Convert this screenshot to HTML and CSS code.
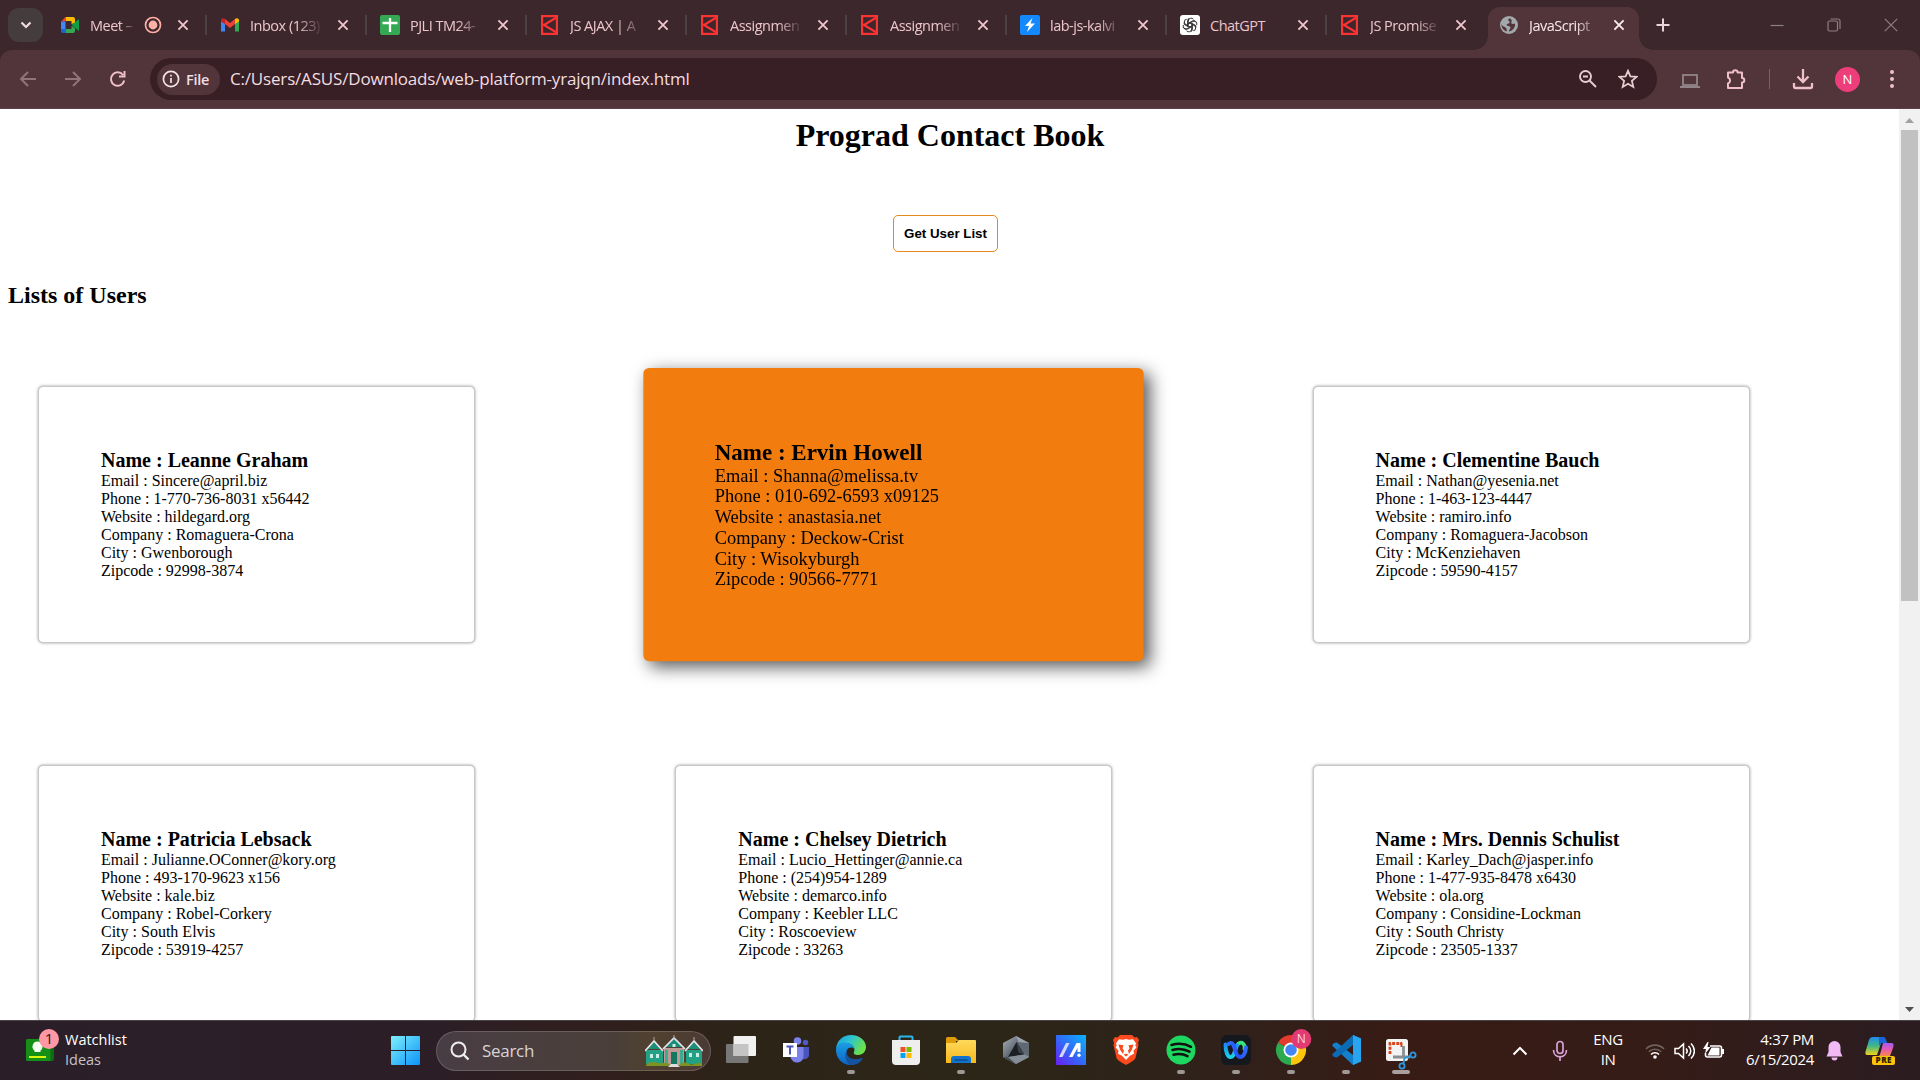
FILE: index.html
```html
<!DOCTYPE html>
<html lang="en">
<head>
<meta charset="utf-8">
<title>JavaScript</title>
<link rel="stylesheet" href="styles.css">
</head>
<body>
<svg class="defs" aria-hidden="true">
  <defs>
    <linearGradient id="gWin" x1="0" y1="0" x2="1" y2="1"><stop offset="0" stop-color="#7df0fb"/><stop offset="1" stop-color="#0c93fa"/></linearGradient>
    <linearGradient id="gEdgeA" x1="0" y1="0" x2="1" y2=".4"><stop offset="0" stop-color="#1aa0dc"/><stop offset=".5" stop-color="#2ec4d0"/><stop offset="1" stop-color="#6ae04c"/></linearGradient>
    <linearGradient id="gEdgeB" x1="0" y1="0" x2="0" y2="1"><stop offset="0" stop-color="#1b9fe4"/><stop offset="1" stop-color="#0b64c4"/></linearGradient>
    <linearGradient id="gMy" x1="0" y1="1" x2="1" y2="0"><stop offset="0" stop-color="#6a1ef4"/><stop offset=".5" stop-color="#2f6cf8"/><stop offset="1" stop-color="#08b4ff"/></linearGradient>
    <linearGradient id="gHex" x1="0" y1="0" x2="1" y2="1"><stop offset="0" stop-color="#a9b2bb"/><stop offset=".5" stop-color="#59626c"/><stop offset="1" stop-color="#8d97a1"/></linearGradient>
    <linearGradient id="gFolder" x1="0" y1="0" x2="0" y2="1"><stop offset="0" stop-color="#ffd95c"/><stop offset="1" stop-color="#f7b91d"/></linearGradient>
    <linearGradient id="gWebex" x1="0" y1="0" x2="1" y2="0"><stop offset="0" stop-color="#2b6cff"/><stop offset=".6" stop-color="#2b50f5"/><stop offset="1" stop-color="#2b6cff"/></linearGradient>
    <linearGradient id="gWebexL" x1="0" y1="0" x2="0" y2="1"><stop offset="0" stop-color="#1a8cf0"/><stop offset="1" stop-color="#1ccfe6"/></linearGradient>
    <linearGradient id="gCopA" x1="0" y1="0" x2="0" y2="1"><stop offset="0" stop-color="#1e8cf0"/><stop offset=".5" stop-color="#41b883"/><stop offset="1" stop-color="#f5d21b"/></linearGradient>
    <linearGradient id="gCopB" x1="0" y1="0" x2="0" y2="1"><stop offset="0" stop-color="#a15bf2"/><stop offset=".5" stop-color="#e75ab0"/><stop offset="1" stop-color="#f98a4b"/></linearGradient>
    <symbol id="close" viewBox="0 0 20 20"><path d="M5.4 5.4l9.2 9.2M14.6 5.4l-9.2 9.2" stroke="currentColor" stroke-width="1.9"/></symbol>
    <symbol id="kalvium" viewBox="0 0 20 20"><rect x="2.1" y="1.1" width="14.8" height="17.8" fill="none" stroke="#fb3333" stroke-width="2.2"/><path d="M16.5 2.5L4 10l12.500 7.500" fill="none" stroke="#fb3333" stroke-width="2.2"/></symbol>
  </defs>
</svg>
<header class="browser">
  <div class="tabstrip">
    <button class="tab-search"><svg width="14" height="14" viewBox="0 0 14 14"><path d="M2.500 4.500L7 9l4.500-4.500" fill="none" stroke="#f0dcdf" stroke-width="2.200"/></svg></button>
    <div class="tab">
      <svg class="fav" viewBox="0 0 20 20"><path d="M5.500 2H13a2 2 0 0 1 2 2v4l-3.500 1V6H5.500z" fill="#fbbc04"/><path d="M5.500 2v4.500H1z" fill="#ea4335"/><path d="M1 6.500h4.500v7.500H1z" fill="#4285f4"/><path d="M1 14h4.500v4H3a2 2 0 0 1-2-2z" fill="#1967d2"/><path d="M5.500 14h6v-3L15 13v3a2 2 0 0 1-2 2H5.500z" fill="#34a853"/><path d="M11.500 10L19 4v12z" fill="#0f9d48"/></svg>
      <span class="tab-title short">Meet –</span>
      <svg class="rec" viewBox="0 0 18 18"><circle cx="9" cy="9" r="7.500" fill="none" stroke="#ffb0a6" stroke-width="1.700"/><circle cx="9" cy="9" r="4.400" fill="#ffb0a6"/></svg>
      <svg class="close"><use href="#close"/></svg>
    </div>
    <div class="tab">
      <svg class="fav" viewBox="0 0 20 20"><path d="M1 5v11.500h4V8z" fill="#4285f4"/><path d="M19 5v11.500h-4V8z" fill="#34a853"/><path d="M5 4l5 4 5-4v5l-5 4-5-4z" fill="#ea4335"/><path d="M1 5.500C1 3 3.500 2.500 5 4v5L1 6.500z" fill="#c5221f"/><path d="M19 5.500C19 3 16.500 2.500 15 4v5l4-2.500z" fill="#fbbc04"/></svg>
      <span class="tab-title">Inbox (123)</span><svg class="close"><use href="#close"/></svg>
    </div>
    <div class="tab">
      <svg class="fav" viewBox="0 0 20 20"><rect width="20" height="20" rx="2" fill="#34a853"/><path d="M10 3v14M2.500 8h15" stroke="#fff" stroke-width="2.300"/></svg>
      <span class="tab-title">PJLI TM24-</span><svg class="close"><use href="#close"/></svg>
    </div>
    <div class="tab"><svg class="fav"><use href="#kalvium"/></svg><span class="tab-title">JS AJAX | A</span><svg class="close"><use href="#close"/></svg></div>
    <div class="tab"><svg class="fav"><use href="#kalvium"/></svg><span class="tab-title">Assignmen</span><svg class="close"><use href="#close"/></svg></div>
    <div class="tab"><svg class="fav"><use href="#kalvium"/></svg><span class="tab-title">Assignmen</span><svg class="close"><use href="#close"/></svg></div>
    <div class="tab">
      <svg class="fav" viewBox="0 0 20 20"><rect width="20" height="20" rx="2" fill="#1389fd"/><path d="M12.500 3L5 11h4l-2 6 8-8.500h-4.500z" fill="#fff"/></svg>
      <span class="tab-title">lab-js-kalvi</span><svg class="close"><use href="#close"/></svg>
    </div>
    <div class="tab">
      <svg class="fav" viewBox="0 0 20 20"><rect width="20" height="20" rx="3" fill="#fff"/><g fill="none" stroke="#222" stroke-width=".9"><path id="petal" d="M8.300 10.800V6a2.900 2.900 0 0 1 5.200-1.700M8.300 8.300l3.900-2.300a2.900 2.900 0 0 1 3 0"/><use href="#petal" transform="rotate(60 10 10)"/><use href="#petal" transform="rotate(120 10 10)"/><use href="#petal" transform="rotate(180 10 10)"/><use href="#petal" transform="rotate(240 10 10)"/><use href="#petal" transform="rotate(300 10 10)"/></g></svg>
      <span class="tab-title plain">ChatGPT</span><svg class="close"><use href="#close"/></svg>
    </div>
    <div class="tab last"><svg class="fav"><use href="#kalvium"/></svg><span class="tab-title">JS Promise</span><svg class="close"><use href="#close"/></svg></div>
    <div class="tab active">
      <svg class="fav" viewBox="0 0 20 20"><circle cx="10" cy="10" r="9" fill="#a3a8ad"/><path d="M10.500 3.500c-2 .5-1.500 2-.5 2.500s1 2-.5 2.500-2.500 1-1.500 2 3.500.5 3.500 2-1.500 1.500-1.500 4c3-.5 6.500-3.500 6-7.500-1-.5-2.500.5-3.500-.5s1-2.500 0-3.500-.5-1.500-2-1.500zM2.500 9c1 3 3.500 2.500 4.500 4s1 2.500.5 3.500C4.500 15.500 2 12 2.500 9z" fill="#51353a"/></svg>
      <span class="tab-title">JavaScript</span><svg class="close"><use href="#close"/></svg>
    </div>
    <button class="new-tab"><svg width="16" height="16" viewBox="0 0 16 16"><path d="M8 1.500v13M1.500 8h13" stroke="#ead6d9" stroke-width="2"/></svg></button>
    <div class="window-controls">
      <svg width="14" height="14" viewBox="0 0 14 14"><path d="M.5 7.500h13"/></svg>
      <svg width="14" height="14" viewBox="0 0 14 14"><rect x="1" y="3" width="9.500" height="10" rx="1.500"/><path d="M3.500 1h7.500a2 2 0 0 1 2 2v8"/></svg>
      <svg width="14" height="14" viewBox="0 0 14 14"><path d="M.8.8l12.400 12.400M13.200.8L.8 13.200"/></svg>
    </div>
  </div>
  <div class="toolbar">
    <div class="nav">
      <svg class="dim" viewBox="0 0 20 20"><path d="M18 10H3M10 3l-7 7 7 7"/></svg>
      <svg class="dim" viewBox="0 0 20 20"><path d="M2 10h15M10 3l7 7-7 7"/></svg>
      <svg viewBox="0 0 20 20"><path d="M16.200 11.500A6.700 6.700 0 1 1 15 6M16.500 2v5.500H11"/></svg>
    </div>
    <div class="omnibox">
      <span class="chip"><svg width="18" height="18" viewBox="0 0 18 18"><circle cx="9" cy="9" r="7.600" fill="none" stroke="#f4e3e5" stroke-width="1.700"/><path d="M9 8v5M9 4.800v1.800" stroke="#f4e3e5" stroke-width="1.700"/></svg><b>File</b></span>
      <span class="url">C:/Users/ASUS/Downloads/web-platform-yrajqn/index.html</span>
      <svg class="mag" viewBox="0 0 20 20"><circle cx="7.500" cy="7.500" r="5.500"/><path d="M11.500 11.500l6.500 6.500M5 7.500h5"/></svg>
      <svg class="star" viewBox="0 0 20 20"><path d="M10 1.800l2.400 5.600 6.100.5-4.600 4 1.400 6L10 14.700 4.700 17.900l1.400-6-4.600-4 6.100-.5z"/></svg>
    </div>
    <svg class="laptop" width="20" height="16" viewBox="0 0 20 16"><rect x="3" y="2" width="14" height="10" fill="none" stroke="#918488" stroke-width="1.800"/><path d="M0 14h20" stroke="#918488" stroke-width="2"/></svg>
    <svg class="puzzle" width="22" height="22" viewBox="0 0 22 22"><path d="M3 4.500h5a2.300 2.300 0 0 1 4.600 0H17V10a2.300 2.300 0 0 1 0 4.600V20H3v-4.500a3.200 3.200 0 0 0 0-6z" fill="none" stroke="#efbfca" stroke-width="2" stroke-linejoin="round"/></svg>
    <span class="divider"></span>
    <svg class="download" width="22" height="22" viewBox="0 0 22 22"><path d="M11 1v13M5.500 8.500L11 14l5.500-5.500M2 15v3.500a1.500 1.500 0 0 0 1.500 1.500h15a1.500 1.500 0 0 0 1.500-1.500V15" fill="none" stroke="#efbfca" stroke-width="2.300"/></svg>
    <span class="avatar">N</span>
    <svg class="dots" width="6" height="20" viewBox="0 0 6 20" fill="#efbfca"><circle cx="3" cy="3" r="2"/><circle cx="3" cy="10" r="2"/><circle cx="3" cy="17" r="2"/></svg>
  </div>
</header>
<div class="viewport">
  <main class="page">
    <h1>Prograd Contact Book</h1>
    <button class="get-users">Get User List</button>
    <h2>Lists of Users</h2>
    <section class="users">
      <article class="card"><h3>Name : Leanne Graham</h3><p>Email : Sincere@april.biz</p><p>Phone : 1-770-736-8031 x56442</p><p>Website : hildegard.org</p><p>Company : Romaguera-Crona</p><p>City : Gwenborough</p><p>Zipcode : 92998-3874</p></article>
      <article class="card hovered"><h3>Name : Ervin Howell</h3><p>Email : Shanna@melissa.tv</p><p>Phone : 010-692-6593 x09125</p><p>Website : anastasia.net</p><p>Company : Deckow-Crist</p><p>City : Wisokyburgh</p><p>Zipcode : 90566-7771</p></article>
      <article class="card"><h3>Name : Clementine Bauch</h3><p>Email : Nathan@yesenia.net</p><p>Phone : 1-463-123-4447</p><p>Website : ramiro.info</p><p>Company : Romaguera-Jacobson</p><p>City : McKenziehaven</p><p>Zipcode : 59590-4157</p></article>
      <article class="card"><h3>Name : Patricia Lebsack</h3><p>Email : Julianne.OConner@kory.org</p><p>Phone : 493-170-9623 x156</p><p>Website : kale.biz</p><p>Company : Robel-Corkery</p><p>City : South Elvis</p><p>Zipcode : 53919-4257</p></article>
      <article class="card"><h3>Name : Chelsey Dietrich</h3><p>Email : Lucio_Hettinger@annie.ca</p><p>Phone : (254)954-1289</p><p>Website : demarco.info</p><p>Company : Keebler LLC</p><p>City : Roscoeview</p><p>Zipcode : 33263</p></article>
      <article class="card"><h3>Name : Mrs. Dennis Schulist</h3><p>Email : Karley_Dach@jasper.info</p><p>Phone : 1-477-935-8478 x6430</p><p>Website : ola.org</p><p>Company : Considine-Lockman</p><p>City : South Christy</p><p>Zipcode : 23505-1337</p></article>
    </section>
  </main>
  <div class="scrollbar">
    <svg width="21" height="21" viewBox="0 0 21 21"><path d="M6 14l4.500-5 4.500 5z" fill="#a0a0a0"/></svg>
    <div class="thumb"></div>
    <svg width="21" height="21" viewBox="0 0 21 21"><path d="M6 8l4.500 5L15 8z" fill="#505050"/></svg>
  </div>
</div>
<footer class="taskbar">
  <div class="widget">
    <svg width="42" height="34" viewBox="0 0 42 34"><rect x="4" y="11" width="27" height="22" rx="2" fill="#0d6b12"/><rect x="3" y="11" width="24.500" height="22" rx="1.500" fill="#159017"/><rect x="6" y="28" width="17" height="2" fill="#d8f50c"/><path d="M14.500 13.500a5 5 0 0 1 3 9v1.500h-6v-1.500a5 5 0 0 1 3-9z" fill="#f4fff0"/><circle cx="26" cy="11" r="10" fill="#ff98a4"/><text x="26" y="16" text-anchor="middle" class="badge-count">1</text></svg>
    <div class="widget-text"><span>Watchlist</span><span class="sub">Ideas</span></div>
  </div>
  <svg class="start" width="29" height="29" viewBox="0 0 29 29"><path d="M1 0h13v14H0V1a1 1 0 0 1 1-1zM15 0h13a1 1 0 0 1 1 1v13H15zM0 15h14v14H1a1 1 0 0 1-1-1zM15 15h14v13a1 1 0 0 1-1 1H15z" fill="url(#gWin)"/></svg>
  <div class="search">
    <svg width="20" height="20" viewBox="0 0 20 20"><circle cx="8.500" cy="8.500" r="7" fill="none" stroke="#eee" stroke-width="2"/><path d="M13.500 13.500l5 5" stroke="#eee" stroke-width="2.400"/></svg>
    <span>Search</span>
    <svg class="houses" width="58" height="32" viewBox="0 0 58 32"><path d="M1 15h17v14H1zM41 15h16v14H41z" fill="#23a184"/><path d="M19 13h20v17H19z" fill="#c09a94"/><path d="M2 14l7-8 7 8zM42 14l7-8 7 8zM20 12l9-9 9 9z" fill="#1c8d76"/><path d="M0 16l9-10 9 10M40 16l9-10 9 10M18 14L29 3l11 11" fill="none" stroke="#e9e5ee" stroke-width="1.700"/><path d="M9 6V2M49 6V2M29 4V0" stroke="#aaa"/><path d="M26 17h6v12h-6z" fill="#16775f"/><path d="M5 19h3v4H5zM11 19h3v4h-3zM44 18h3v4h-3zM51 18h3v4h-3zM27.500 9h3v3h-3z" fill="#c8eee5"/><path d="M20 15h3v14h-3zM35 15h3v14h-3z" fill="#3cab92"/><path d="M1 30c4-4 9-3 12-2s6-2 12 1v2H1zM34 31c3-5 6-4 10-2s9-3 13 0v2z" fill="#7c9424"/><path d="M26 29h6l3 3H23z" fill="#ddd"/></svg>
  </div>
  <nav class="apps">
    <div class="app"><svg viewBox="0 0 30 30"><rect x="0" y="9" width="22.500" height="19" rx="1" fill="#777"/><rect x="7.500" y="1" width="22.500" height="20" rx="1" fill="#f1f1f1"/><rect x="7.500" y="9" width="15" height="12" fill="#c4c4c4"/></svg></div>
    <div class="app"><svg viewBox="0 0 30 30"><circle cx="24.500" cy="7.500" r="2.700" fill="#5059c9"/><path d="M20 12h8v8c0 3-3 5-7 4z" fill="#4b53bc"/><circle cx="16.500" cy="6" r="3.800" fill="#7b83eb"/><path d="M9 12h13.500v8a6.500 6.500 0 0 1-13 2z" fill="#7b83eb"/><rect x="2" y="8" width="14" height="14" fill="#fff"/><path d="M5.500 11.500h7M9 11.500v8" stroke="#4b53bc" stroke-width="2"/></svg></div>
    <div class="app running"><svg viewBox="0 0 30 30"><path d="M0 14C1 5 7 0 15 0c9 0 15 6 15 12 0 5-4 8-8 8-3 0-5-1-4-3 2-5-3-9-8-9-5 0-9 3-10 6z" fill="url(#gEdgeA)"/><path d="M0 15C0 9 5 7.500 9 7.500c5 0 9 3 9.500 6.500-2-2.500-7-2-8 2-1 5 3 10 9 10 3 0 5-1 7-2-3 4-7 6-12 6C6 30 0 23 0 15z" fill="url(#gEdgeB)"/><path d="M13 13c-4 3-3 11 6 11 4 0 7-1.500 8-1-3 5-8 7-13 7-5-3-7-13-1-17z" fill="#15539f"/></svg></div>
    <div class="app"><svg viewBox="0 0 30 30"><path d="M8.500 6V2.500a1 1 0 0 1 1-1h11a1 1 0 0 1 1 1V6" fill="none" stroke="#28b7ea" stroke-width="2"/><path d="M1 5h28v21a4 4 0 0 1-4 4H5a4 4 0 0 1-4-4z" fill="#eee"/><path d="M9.500 12h5v5h-5z" fill="#f25022"/><path d="M15.500 12h5v5h-5z" fill="#7fba00"/><path d="M9.500 18h5v5h-5z" fill="#00a4ef"/><path d="M15.500 18h5v5h-5z" fill="#ffb900"/></svg></div>
    <div class="app running"><svg viewBox="0 0 30 30"><path d="M0 3.500A1.500 1.500 0 0 1 1.500 2H9l4 4h-3v3H0z" fill="#e09b08"/><path d="M0 8h10l3-3h16a1 1 0 0 1 1 1v22H0z" fill="url(#gFolder)"/><path d="M5 28v-4a3 3 0 0 1 3-3h14a3 3 0 0 1 3 3v4z" fill="#1273cd"/><path d="M9 25h12" stroke="#0a4d90" stroke-width="1.500" stroke-linecap="round"/></svg></div>
    <div class="app"><svg viewBox="0 0 30 30"><path d="M15 1l13 7v14l-13 7L2 22V8z" fill="url(#gHex)"/><path d="M15 1l13 7-10 0z" fill="#9aa3ac"/><path d="M28 8v14l-4-3-8-12z" fill="#5f6973"/><path d="M15.500 7l8 12.500L7 22z" fill="#1c1f23"/><path d="M15.500 7l8 12.500-6-2z" fill="#3c4148"/><path d="M2 22l5 0 16-2.500 5 2.500-13 7z" fill="#858e97"/><path d="M2 22l5 0 8 7z" fill="#454c54"/></svg></div>
    <div class="app"><svg viewBox="0 0 30 30"><path d="M0 0h30v30H0z" fill="url(#gMy)"/><path d="M3 22L10 8h3.500l-7 14z" fill="#cfd9ff"/><path d="M13 22l7.500-14h4v9h-3v-4l-5 9z" fill="#fff"/><circle cx="23" cy="20.300" r="1.700" fill="#fff"/></svg></div>
    <div class="app"><svg viewBox="0 0 30 30"><path d="M9 0h12l2.500 2.500L26 2l2 3-1 3 .5 2-3 13c-.5 2-5 4.500-9.500 7-4.500-2.500-9-5-9.500-7l-3-13L3 8 2 5l2-3 2.500.5z" fill="#fb4a1d"/><path d="M15 4l3 .7 4-.5 3 4-.7 2.500 1.200 1.500-3 3.500.5 3-4 2L15 25l-4-4.300-4-2 .5-3-3-3.500 1.200-1.500L5 8.200l3-4 4 .5z" fill="#fff"/><path d="M7.500 9.500l5 .8-1 3.200 1.500 2-1 3.500-3-4.500zM22.500 9.500l-5 .8 1 3.200-1.500 2 1 3.500 3-4.500zM12.500 19.500l2.500-.8 2.500.8-2.500 2z" fill="#fb4a1d"/></svg></div>
    <div class="app running"><svg viewBox="0 0 30 30"><circle cx="15" cy="15" r="14.500" fill="#1ed760"/><path d="M5.500 10c7-2 14-1.300 19.500 1.800M6.500 15c6-1.700 12-1 17 1.700M7.500 19.700c5-1.300 10-.8 14 1.500" fill="none" stroke="#111" stroke-width="2.500" stroke-linecap="round"/></svg></div>
    <div class="app running"><svg viewBox="0 0 30 30"><rect width="30" height="30" rx="6" fill="#15181c"/><path d="M16 10.500c1.500-3 4.500-3.500 6-2 1.500 1.500 2 3.500 1.500 5.500" fill="none" stroke="#3ce07c" stroke-width="3.800" stroke-linecap="round"/><path d="M4.500 9.500C4.500 16 6.500 22 9.500 22c3.500 0 4.500-7 6.500-11.500" fill="none" stroke="url(#gWebexL)" stroke-width="4" stroke-linecap="round"/><path d="M7.500 9c3-2.500 5 0 6 4s2.500 9 5.500 9c3.500 0 5.500-5 6-9.500" fill="none" stroke="url(#gWebex)" stroke-width="4" stroke-linecap="round"/></svg></div>
    <div class="app running"><svg class="chrome" viewBox="0 0 30 30"><path d="M15 15L2 7.500A15 15 0 0 1 28 7.500z" fill="#e33b2e"/><path d="M15 15v15A15 15 0 0 1 2 7.500z" fill="#2da94f"/><path d="M15 15l13-7.500A15 15 0 0 1 15 30z" fill="#fdc60a"/><path d="M15 22l-1 8L8.500 19z" fill="#2da94f"/><circle cx="15" cy="15" r="7.500" fill="#fff"/><circle cx="15" cy="15" r="5.800" fill="#4286f5"/><circle cx="25.300" cy="4" r="10" fill="#e23a72"/><text x="25.300" y="8.300" text-anchor="middle" class="n">N</text></svg></div>
    <div class="app running"><svg viewBox="0 0 30 30"><path d="M22 0l8 3.500v23L22 30 1 10.500l2-2.500 3-.5L22 20z" fill="#1480cb"/><path d="M22 0L1 19.500 3 22l3 .5L22 10z" fill="#0c6bb5"/><path d="M22 0l8 3.500v23L22 30z" fill="#28a5ee"/></svg></div>
    <div class="app current"><svg class="chrome" viewBox="0 0 30 30"><rect x="0" y="4" width="22" height="22" rx="2.500" fill="#f3f3f3"/><path d="M4 19V8.500h12" fill="none" stroke="#d9441c" stroke-width="2.800" stroke-dasharray="3 1.200"/><path d="M14 8.500h1.500V12" fill="none" stroke="#d9441c" stroke-width="2"/><path d="M17.500 11v12M7 22h17" stroke="#8a8f94" stroke-width="2.800"/><circle cx="27" cy="20" r="2.600" fill="none" stroke="#2b97dc" stroke-width="1.800"/><circle cx="16" cy="31" r="2.600" fill="none" stroke="#2b97dc" stroke-width="1.800"/><path d="M24.500 21l-6 2-1 5.500" fill="none" stroke="#2b97dc" stroke-width="1.800"/></svg></div>
  </nav>
  <div class="tray">
    <svg class="caret" width="16" height="12" viewBox="0 0 16 12"><path d="M1.500 9.500L8 3l6.500 6.500" fill="none" stroke="#fff" stroke-width="2"/></svg>
    <svg class="mic" width="16" height="22" viewBox="0 0 16 22"><rect x="5" y="1.500" width="6" height="12" rx="3"/><path d="M1.500 10c0 9 13 9 13 0M8 17v4"/></svg>
    <div class="lang"><span>ENG</span><span>IN</span></div>
    <svg class="wifi" width="20" height="18" viewBox="0 0 20 18" fill="none" stroke-width="1.600"><path d="M1 7a12.500 12.500 0 0 1 18 0" stroke="#71615c"/><path d="M3.800 9.800a8.800 8.800 0 0 1 12.400 0" stroke="#71615c"/><path d="M6 12.500a5.600 5.600 0 0 1 8 0" stroke="#fff"/><circle cx="10" cy="15" r="1.800" fill="#fff" stroke="none"/></svg>
    <svg class="vol" width="21" height="18" viewBox="0 0 21 18" fill="none" stroke="#fff" stroke-width="1.500"><path d="M1 6.500h3.500l5-4.500v14l-5-4.500H1zM12 6.500c1.500 1.500 1.500 3.500 0 5M14.500 4c3 3 3 7 0 10M17 1.500c4.500 4.500 4.500 10.500 0 15"/></svg>
    <svg class="bat" width="21" height="18" viewBox="0 0 21 18"><path d="M7 4h9.500a2 2 0 0 1 2 2v7a2 2 0 0 1-2 2h-12a2 2 0 0 1-2-2v-2" fill="none" stroke="#fff" stroke-width="1.600"/><path d="M8.500 5.500h8v8h-12zM19 7h2v5h-2z" fill="#fff"/><path d="M4.500 0L0 7h3l-1 5 5.500-7H4.500l1-5z" fill="#fff"/></svg>
    <div class="clock"><span>4:37 PM</span><span>6/15/2024</span></div>
    <svg class="bell" width="17" height="20" viewBox="0 0 17 20" fill="#f0b9f3"><path d="M8.500 0a6 6 0 0 1 6 6v5l2 4.500H.5l2-4.500V6a6 6 0 0 1 6-6zM5.500 16.500h6a3 3 0 0 1-6 0z"/></svg>
    <svg class="copilot" width="30" height="30" viewBox="0 0 30 30"><path d="M8 1h11l3 6h-6l-4 12H3c-3 0-3-2-2-5L4 4c.7-2 2-3 4-3z" fill="url(#gCopA)"/><path d="M14 1h4c2 0 3 1 4 6h-6l-2 3z" fill="#1b62d8"/><path d="M18 7h8c3 0 3 2 2 5l-3 8H13c2 0 2-2 3-5z" fill="url(#gCopB)"/><rect x="7" y="20" width="23" height="9" rx="2" fill="#fcc30b"/><text x="18.800" y="27.300" text-anchor="middle" class="pre">PRE</text></svg>
  </div>
</footer>
</body>
</html>
```

FILE: styles.css
```css
* { box-sizing: border-box; }
body { margin: 0; width: 1920px; height: 1080px; overflow: hidden; display: flex; flex-direction: column; background: #fff; font-family: "Open Sans", "Noto Sans", sans-serif; }
button { border: 0; padding: 0; background: none; }
svg { display: block; flex: none; }
h1, h2, h3, p { margin: 0; }
.defs { width: 0; height: 0; position: absolute; }

/* Browser frame */
.browser { height: 109px; background: #3b272c; }
.tabstrip { height: 50px; display: flex; align-items: flex-start; padding-left: 8px; background: #3b272c; }
.tab-search { width: 35px; height: 34px; margin: 8px 4px 0 0; border-radius: 11px; background: #453c3d; display: grid; place-items: center; }
.tab { width: 160px; height: 50px; padding-left: 13px; display: flex; align-items: center; border-right: 2px solid transparent; border-image: linear-gradient(transparent 15px, #4c4244 15px, #4c4244 35px, transparent 35px) 1; color: #eec5cd; }
.fav { width: 20px; height: 20px; margin-right: 10px; }
.tab-title { width: 73px; margin-right: 10px; padding-top: 1px; overflow: hidden; white-space: nowrap; font-size: 14.5px; line-height: 24px; letter-spacing: -0.5px; -webkit-mask-image: linear-gradient(90deg, #000 65%, transparent); mask-image: linear-gradient(90deg, #000 65%, transparent); }
.tab-title.plain { -webkit-mask-image: none; mask-image: none; }
.tab-title.short { width: 46px; margin-right: 8px; }
.rec { width: 18px; height: 18px; margin-right: 11px; }
.close { width: 20px; height: 20px; }
.tab.last { border-color: transparent; border-image: none; width: 161px; }
.tab.last .tab-title, .tab.active .tab-title { width: 71px; }
.tab.active { width: 151px; height: 43px; margin-top: 7px; padding: 0 0 7px 11px; background: #51353a; border: 0; border-image: none; border-radius: 12px 12px 0 0; color: #fbe9ec; position: relative; }
.tab.active .tab-title { margin-right: 9px; }
.tab.active::before, .tab.active::after { content: ""; position: absolute; bottom: 0; width: 14px; height: 14px; }
.tab.active::before { left: -14px; background: radial-gradient(circle at 0 0, transparent 13.5px, #51353a 14px); }
.tab.active::after { right: -14px; background: radial-gradient(circle at 100% 0, transparent 13.5px, #51353a 14px); }
.new-tab { margin: 17px 0 0 16px; }
.window-controls { display: flex; gap: 43px; margin: 18px 22px 0 auto; fill: none; stroke: #8d8083; stroke-width: 1.2; }
.toolbar { height: 59px; display: flex; align-items: center; background: #51353a; border-radius: 12px 12px 0 0; border-bottom: 1px solid #5a4246; }
.nav { display: flex; gap: 25px; width: 150px; padding-left: 18px; }
.nav svg { width: 20px; height: 20px; fill: none; stroke: #efbfca; stroke-width: 2; }
.nav .dim { stroke: #90747a; }
.omnibox { width: 1507px; height: 42px; border-radius: 21px; background: #381f25; display: flex; align-items: center; padding: 0 19px 0 7px; color: #f2dde0; }
.chip { width: 63px; height: 31px; border-radius: 16px; background: #51353a; display: flex; align-items: center; padding-left: 5px; gap: 6px; font-size: 14.5px; letter-spacing: -0.3px; }
.chip b { font-weight: 600; }
.url { margin-left: 10px; font-size: 17px; letter-spacing: -0.18px; line-height: 26px; }
.mag, .star { width: 20px; height: 20px; fill: none; stroke: #e5cdd1; stroke-width: 1.9; }
.mag { margin-left: auto; margin-right: 20px; }
.star { stroke-width: 1.8; }
.laptop { margin: 4px 0 0 23px; }
.puzzle { margin-left: 25px; }
.divider { width: 1px; height: 20px; margin: 0 22px; background: #7b5f64; }
.avatar { width: 25px; height: 25px; margin-left: 21px; border-radius: 50%; background: #ee3d7b; color: #fff; font-size: 13px; line-height: 25px; text-align: center; }
.dots { margin-left: 29px; }

/* Document */
.viewport { height: 911px; display: flex; overflow: hidden; }
.page { width: 1899px; display: flex; flex-direction: column; padding: 8px 8px 0 9px; overflow: hidden; font-family: "Liberation Serif", serif; color: #000; }
.page > * { flex: none; }
h1 { font-size: 32px; line-height: 37px; text-align: center; }
.get-users { width: 105px; height: 37px; margin: 61px 0 0 884px; border: 1px solid #e58a1c; border-radius: 5px; font: bold 13.333px "Liberation Sans", sans-serif; color: #000; }
h2 { margin: 30px 0 0 -1px; font-size: 24px; line-height: 27px; }
.users { margin: 77px 0 0 29px; display: grid; grid-template-columns: repeat(3, 437px); column-gap: 200.3px; row-gap: 122px; }
.card { height: 257px; border-radius: 5px; background: #fff; border: 1px solid #c8c8c8; box-shadow: 0 0 3px #999; padding: 62px; }
.card h3 { font-size: 20px; line-height: 23px; }
.card p { font-size: 16px; line-height: 18px; white-space: nowrap; }
.hovered { height: 255px; margin: 1px; border: 0; transform: scale(1.15); background: #f27c0e; box-shadow: 5px 5px 15px rgba(0, 0, 0, .65); }
.scrollbar { width: 21px; background: #f1f1f1; display: flex; flex-direction: column; align-items: center; }
.thumb { width: 17px; height: 471px; margin-bottom: auto; background: #c1c1c1; }

/* Taskbar */
.taskbar { height: 60px; display: flex; align-items: center; border-top: 1px solid #4a4446; color: #fff; background: linear-gradient(90deg, #2a1f29 0, #2c1e27 420px, #301f1c 610px, #2d2418 740px, #2c2618 1000px, #30211a 1230px, #381b15 1400px, #351c17 1650px, #2b1c21 1920px); }
.widget { display: flex; width: 391px; padding-left: 23px; }
.widget svg { margin-top: -4px; overflow: visible; }
.badge-count { font-size: 15px; fill: #2a1418; }
.widget-text { display: flex; flex-direction: column; margin-top: -2px; font-size: 14.500px; line-height: 20px; }
.widget-text .sub { color: #c8c2c7; }
.search { width: 275px; height: 40px; margin: 0 2px 0 16px; padding: 0 7px 0 13px; border-radius: 20px; border: 1px solid rgba(255, 255, 255, .17); background: linear-gradient(90deg, #493d45, #4a3f38 65%, #51412f 80%, #4b3a35); display: flex; align-items: center; font-size: 17px; letter-spacing: -0.3px; color: #d9d3d4; }
.search span { margin-left: 12px; }
.houses { margin-left: auto; }
.apps { display: flex; }
.app { width: 55px; height: 59px; display: flex; flex-direction: column; align-items: center; padding-top: 14px; }
.app svg { width: 30px; height: 30px; overflow: visible; }
.app.running::after, .app.current::after { content: ""; width: 8px; height: 4px; margin-top: 5px; border-radius: 2px; background: #9d9894; }
.app.current::after { width: 18px; background: #a9a09d; }
.n { font-size: 12px; fill: #ffd5e4; }
.tray { margin-left: auto; display: flex; align-items: center; padding-right: 25px; font-size: 15px; line-height: 20px; }
.tray span { display: block; }
.caret { margin-right: 24px; }
.mic { fill: none; stroke: #d9a2d9; stroke-width: 1.7; }
.lang { width: 32px; margin: -3px 0 0 24px; text-align: center; letter-spacing: -0.4px; }
.wifi { margin-left: 21px; }
.vol { margin-left: 9px; }
.bat { margin-left: 8px; }
.clock { width: 90px; margin-top: -3px; text-align: right; letter-spacing: -0.35px; }
.bell { margin-left: 12px; }
.copilot { margin-left: 22px; }
.pre { font-size: 8px; font-weight: 800; letter-spacing: .5px; fill: #2a2000; }
```
